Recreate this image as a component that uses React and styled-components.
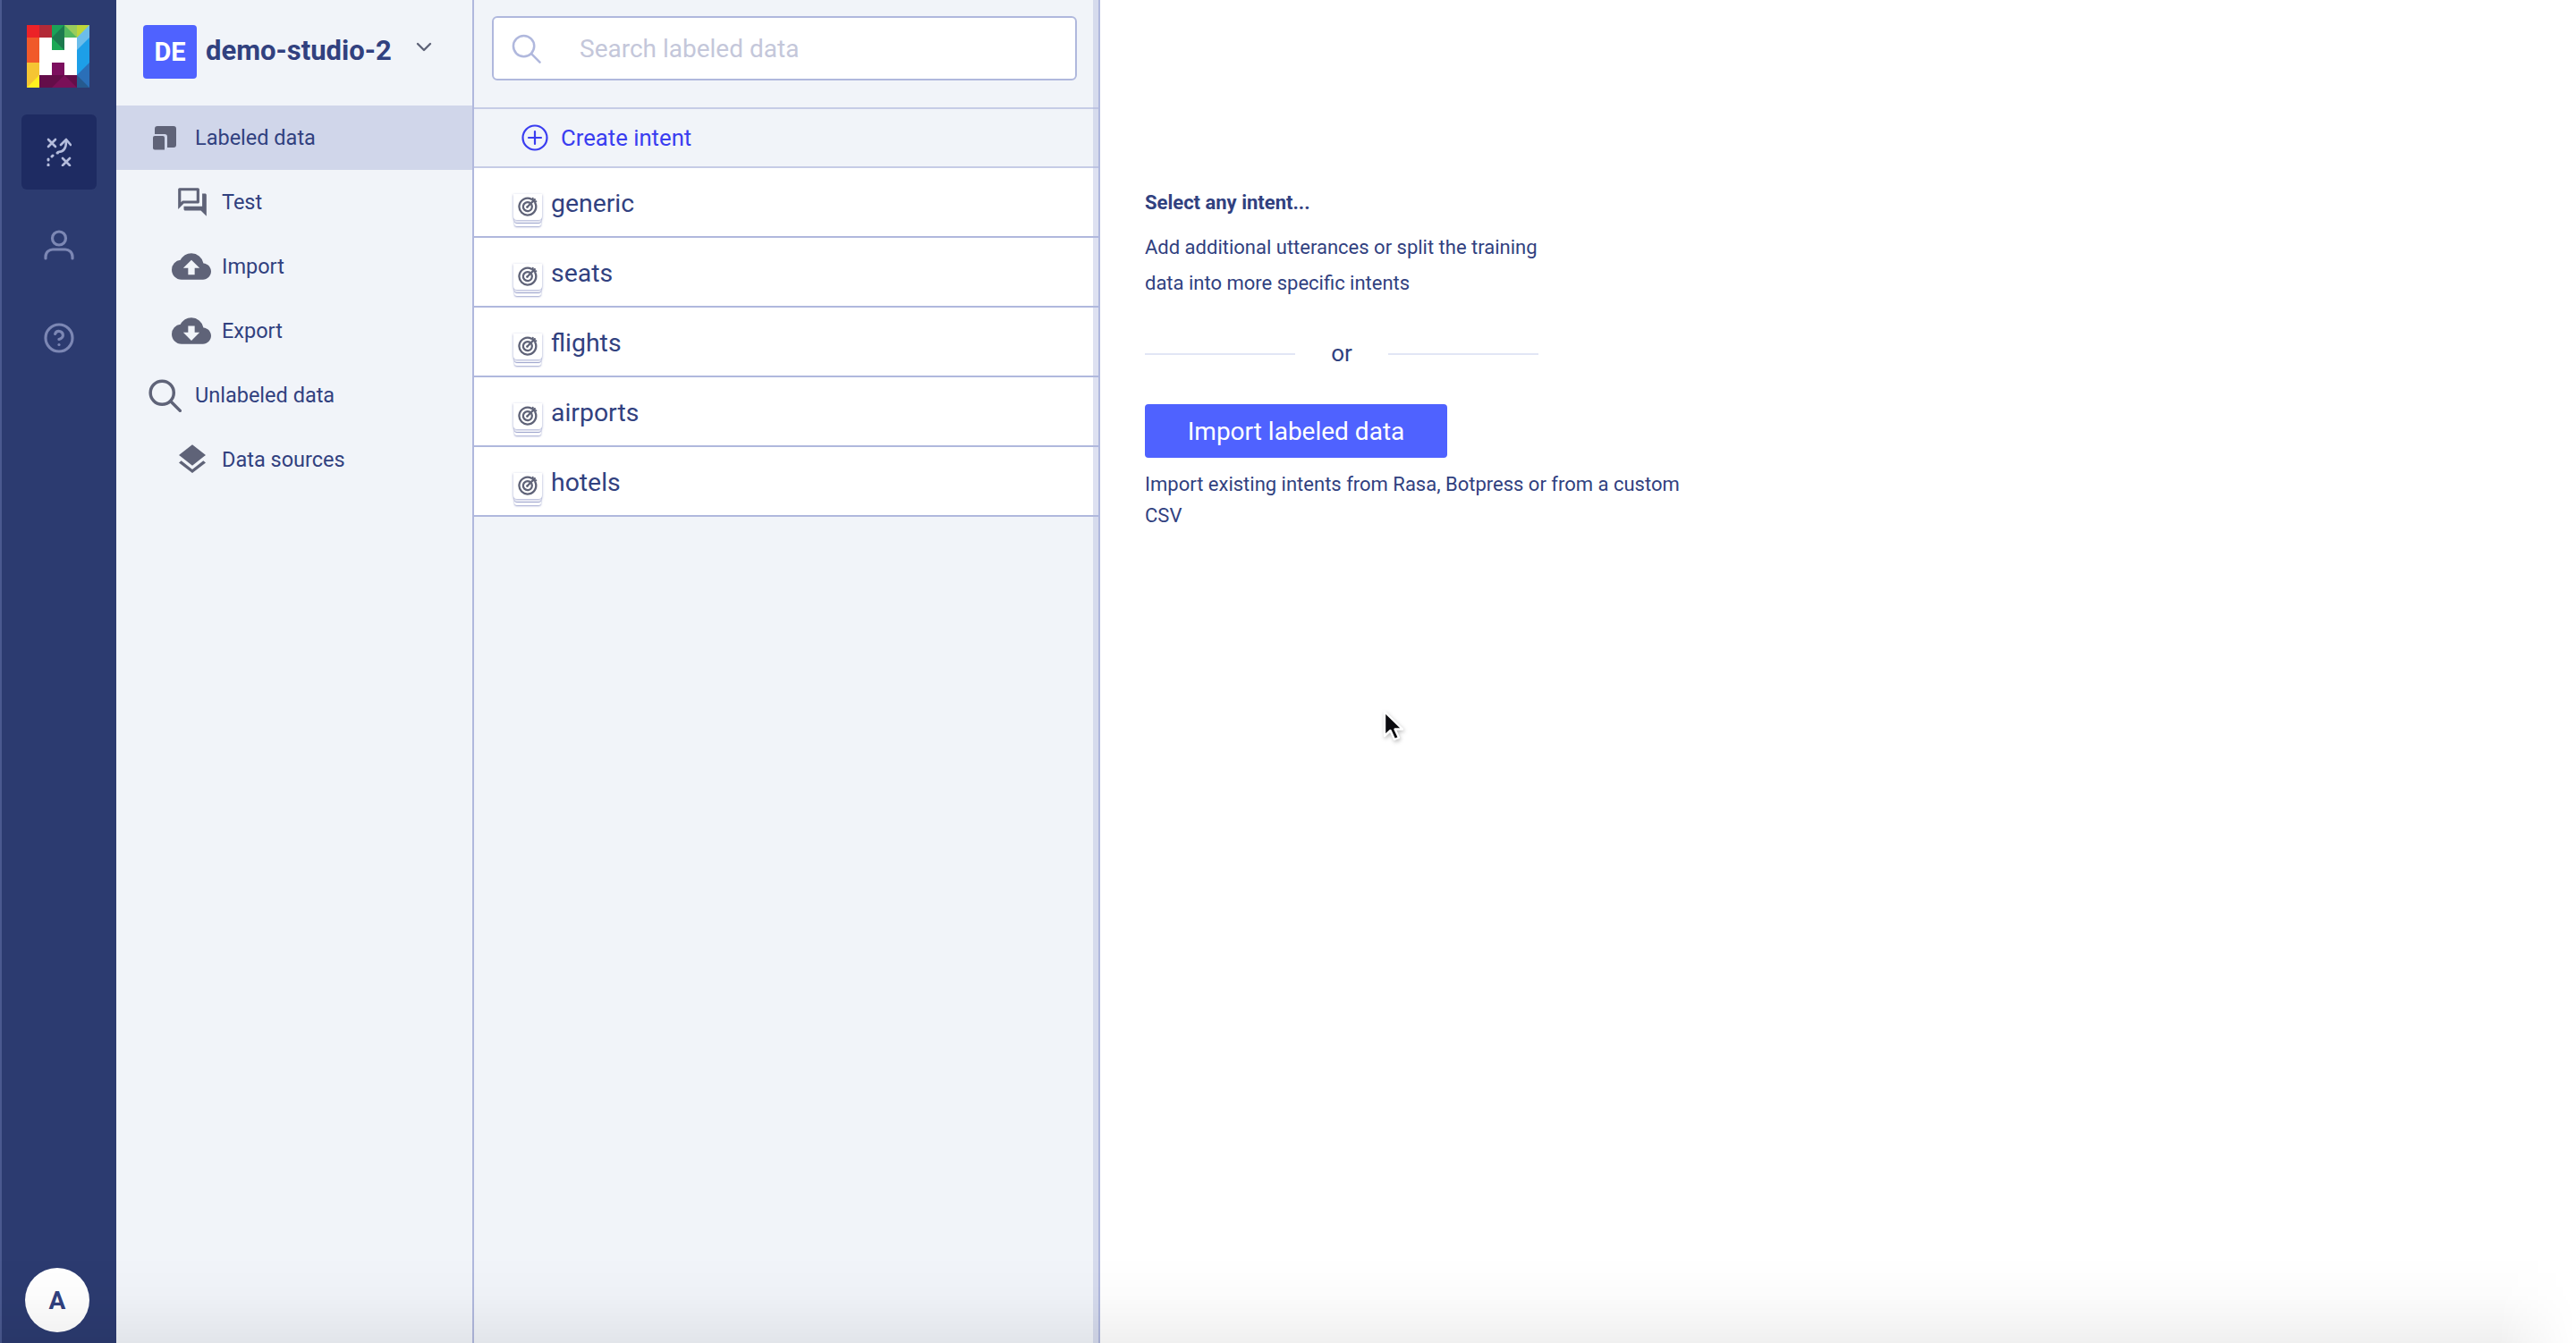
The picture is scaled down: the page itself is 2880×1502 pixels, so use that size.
import React from 'react';
import styled, { createGlobalStyle } from 'styled-components';
import { MdOutlineQuestionAnswer, MdCloudUpload, MdCloudDownload, MdLayers } from 'react-icons/md';
import { CircleHelp } from 'lucide-react';

const Global = createGlobalStyle`
  html, body { margin: 0; padding: 0; background: #fff; }
  body { font-family: Roboto, "Liberation Sans", sans-serif; overflow: hidden; }
  * { box-sizing: border-box; }
`;

const ink = '#31417f';
const iconInk = '#5f6378';
const line = '#b0b8dd';
const panel = '#f1f4f9';

const Page = styled.div`
  position: relative;
  display: flex;
  width: 2880px;
  height: 1502px;
  overflow: hidden;
`;
const Rail = styled.nav`
  flex: 0 0 130px;
  display: flex;
  flex-direction: column;
  align-items: center;
  background: #2c3b70;
  border-left: 2px solid #4a598f;
`;
const Logo = styled.svg`
  display: block;
  width: 70px;
  height: 70px;
  margin: 28px 2px 30px 0;
`;
const RailButton = styled.div`
  width: 84px;
  height: 84px;
  margin-bottom: 20px;
  border-radius: 6px;
  display: flex;
  align-items: center;
  justify-content: center;
  background: ${p => (p.$active ? '#1e2b62' : 'transparent')};
  color: #7c87b4;
`;
const Avatar = styled.div`
  margin: auto 4px 12px 0;
  width: 72px;
  height: 72px;
  border-radius: 50%;
  background: #fff;
  color: ${ink};
  display: flex;
  align-items: center;
  justify-content: center;
  font-size: 28px;
  font-weight: 700;
`;
const Sidebar = styled.aside`
  flex: 0 0 400px;
  background: ${panel};
  border-right: 2px solid ${line};
`;
const Workspace = styled.header`
  height: 118px;
  display: flex;
  align-items: flex-start;
  padding: 28px 0 0 30px;
`;
const Badge = styled.div`
  width: 60px;
  height: 60px;
  border-radius: 4px;
  background: #4f62ff;
  color: #fff;
  font-size: 29px;
  font-weight: 700;
  display: flex;
  align-items: center;
  justify-content: center;
`;
const WorkspaceName = styled.div`
  margin-left: 10px;
  height: 60px;
  line-height: 58px;
  font-size: 31px;
  font-weight: 700;
  color: ${ink};
`;
const Chevron = styled.svg`
  width: 18px;
  height: 11px;
  margin: 19px 0 0 27px;
`;
const NavRow = styled.div`
  height: 72px;
  display: flex;
  align-items: center;
  padding-left: ${p => p.$indent}px;
  background: ${p => (p.$active ? '#d0d6ea' : 'transparent')};
  color: ${iconInk};
`;
const NavIcon = styled.span`
  flex: 0 0 ${p => p.$width}px;
  display: flex;
  align-items: center;
  justify-content: flex-start;
`;
const NavLabel = styled.span`
  font-size: 23.5px;
  color: ${ink};
`;
const Lists = styled.section`
  position: relative;
  flex: 0 0 700px;
  display: flex;
  flex-direction: column;
  background: ${panel};
  border-right: 2px solid ${line};

  &::after {
    content: '';
    position: absolute;
    top: 0;
    right: 0;
    bottom: 0;
    width: 6px;
    background: rgba(176, 184, 221, 0.42);
  }
`;
const SearchBar = styled.div`
  height: 122px;
  padding: 18px 24px 0 20px;
  border-bottom: 2px solid #c6cce6;
`;
const SearchBox = styled.div`
  height: 72px;
  background: #fff;
  border: 2px solid ${line};
  border-radius: 6px;
  display: flex;
  align-items: center;
  padding-left: 20px;
`;
const Placeholder = styled.span`
  margin-left: 43px;
  font-size: 28px;
  color: #c4c7da;
`;
const CreateRow = styled.div`
  height: 66px;
  display: flex;
  align-items: center;
  padding-left: 53px;
  border-bottom: 2px solid #c6cce6;
  color: #3a3df0;
  font-size: 25.7px;
  gap: 14px;
`;
const IntentRow = styled.div`
  height: 78px;
  background: #fff;
  border-bottom: 2px solid ${line};
  display: flex;
  align-items: center;
  padding-left: 44px;
  color: ${ink};
  font-size: 28.4px;
  gap: 10px;
`;
const IntentTile = styled.div`
  position: relative;
  width: 32px;
  height: 29px;
  margin-top: 10px;
  display: flex;
  justify-content: center;
  border-radius: 0 0 4px 4px;
  background: #fff;
  box-shadow:
    0 1px 3px rgba(90, 100, 170, 0.55),
    0 4px 0 -1px #fff,
    0 5px 1px -1px rgba(90, 100, 170, 0.6),
    0 8px 0 -1px #fff,
    0 9px 2px -1px rgba(90, 100, 170, 0.6);
  color: ${iconInk};
`;
const IntentName = styled.span`
  margin-top: 2px;
`;
const Main = styled.main`
  flex: 1;
  padding: 207px 0 0 50px;
  color: ${ink};
  background: #fff;
`;
const Heading = styled.div`
  font-size: 22px;
  font-weight: 700;
  line-height: 40px;
  margin-bottom: 10px;
`;
const Copy = styled.p`
  margin: 0;
  width: ${p => p.$width}px;
  font-size: 22px;
  line-height: ${p => p.$lh}px;
`;
const OrRow = styled.div`
  display: flex;
  align-items: center;
  width: 440px;
  height: 40px;
  margin: 38px 0 37px;
  font-size: 26px;
`;
const OrLine = styled.span`
  flex: 1;
  height: 2px;
  margin-top: 2px;
  background: #e2e6f5;
`;
const OrText = styled.span`
  flex: 0 0 104px;
  text-align: center;
`;
const ImportButton = styled.div`
  width: 338px;
  height: 60px;
  border-radius: 4px;
  background: #4f62ff;
  color: #fff;
  font-size: 28px;
  display: flex;
  align-items: center;
  justify-content: center;
  margin-bottom: 12px;
`;
const Cursor = styled.svg`
  position: absolute;
  left: 1544px;
  top: 792px;
  width: 30px;
  height: 38px;
  filter: drop-shadow(1px 2px 2px rgba(0, 0, 0, 0.25));
`;
const BottomShade = styled.div`
  position: absolute;
  left: 0;
  right: 0;
  bottom: 0;
  height: 100px;
  pointer-events: none;
  background: linear-gradient(to bottom, rgba(0,0,0,0) 0%, rgba(0,0,0,0.012) 45%, rgba(0,0,0,0.06) 100%);
  -webkit-mask-image: linear-gradient(to right, #000 97%, transparent 100%);
  mask-image: linear-gradient(to right, #000 97%, transparent 100%);
`;

const HLogo = () => {
  const s = 14;
  const cells = [
    ['#ec2227', '#b32a38', '#1ba258', '#52b85f', '#bdd63a'],
    ['#f0592a', '#fff', '#1ca855', '#fff', '#6cbdea'],
    ['#f15a2a', '#fff', '#fff', '#fff', '#1d9fe8'],
    ['#f5c533', '#fff', '#7c0f5e', '#fff', '#1d9fe8'],
    ['#f5c533', '#640d49', '#640d49', '#640d49', '#265a8e'],
  ];
  return (
    <Logo viewBox="0 0 70 70" shapeRendering="geometricPrecision">
      {cells.map((row, y) => row.map((c, x) => <rect key={`${x}-${y}`} x={x * s} y={y * s} width={s + 0.2} height={s + 0.2} fill={c} />))}
      <polygon points="28,14 42,0 42,28" fill="#1d7a4e" />
      <polygon points="28,14 42,14 42,28" fill="#1d7a4e" />
      <polygon points="42,0 56,0 56,14" fill="#98cc5c" />
      <polygon points="70,0 70,14 56,14" fill="#6cbdea" />
      <polygon points="56,28 70,14 70,28" fill="#1d9fe8" />
      <polygon points="56,56 70,42 70,70" fill="#2a6fb8" />
      <polygon points="0,56 14,56 0,70" fill="#f5c533" />
      <polygon points="0,70 14,70 14,56" fill="#fff01f" />
      <polygon points="28,70 42,56 56,70" fill="#7a1058" />
      <polygon points="42,42 28,42 28,56 42,56" fill="#7c0f5e" />
    </Logo>
  );
};

const PlayIcon = () => (
  <svg width="28" height="32" viewBox="0 0 28 32" fill="none" stroke="#b4bcdc" strokeWidth="2.6" strokeLinecap="round" strokeLinejoin="round">
    <path d="M2 2l8 8M10 2l-8 8" />
    <path d="M13 16c5 0 9-3 9-12" />
    <path d="M16 8l6-6 5 6" />
    <path d="M18 23l8 8M26 23l-8 8" />
    <path d="M2 31v-1M2 25v-1M6 21l1-1M12 17h0.5" strokeWidth="3" />
  </svg>
);
const PersonIcon = () => (
  <svg width="34" height="34" viewBox="0 0 34 34" fill="none" stroke="#7c87b4" strokeWidth="3.2" strokeLinecap="round">
    <circle cx="17" cy="9.5" r="7.5" />
    <path d="M2 32v-2c0-5 4-8 8-8h14c4 0 8 3 8 8v2" />
  </svg>
);
const LabeledIcon = () => (
  <svg width="26" height="27" viewBox="0 0 26 27" fill={iconInk}>
    <path d="M5 0H23a3 3 0 013 3V21a3 3 0 01-3 3H16V12a3 3 0 00-3-3H2V3a3 3 0 013-3z" />
    <path d="M2 11H11a2 2 0 012 2V26.500H2a2 2 0 01-2-2V13a2 2 0 012-2z" />
  </svg>
);
const SearchGlyph = ({ size, color, width = 2.6 }) => (
  <svg width={size} height={size} viewBox="0 0 34 34" fill="none" stroke={color} strokeWidth={width} strokeLinecap="round">
    <circle cx="14" cy="14" r="12" />
    <path d="M23 23l9.500 9.500" />
  </svg>
);
const PlusCircle = () => (
  <svg width="30" height="30" viewBox="0 0 30 30" fill="none" stroke="#3a3df0" strokeWidth="2.2" strokeLinecap="round">
    <circle cx="15" cy="15" r="13.500" />
    <path d="M15 8v14M8 15h14" />
  </svg>
);
const TargetIcon = () => (
  <svg width="23" height="23" viewBox="0 0 22 22" fill="none" stroke="currentColor" strokeWidth="2.200" strokeLinecap="round" style={{ marginTop: 2 }}>
    <path d="M14.500 3.600A9 9 0 1 0 18.400 7.500" />
    <path d="M12.500 7.300A4.800 4.800 0 1 0 14.700 9.500" />
    <circle cx="10" cy="12" r="1.300" fill="currentColor" stroke="none" />
    <path d="M10.500 11.500L18 4" />
    <path d="M16 2.500v3.500h3.500" strokeWidth="1.800" />
  </svg>
);

const nav = [
  { label: 'Labeled data', indent: 41, width: 47, icon: <LabeledIcon />, active: true },
  { label: 'Test', indent: 66, width: 52, icon: <MdOutlineQuestionAnswer size={38} /> },
  { label: 'Import', indent: 62, width: 56, icon: <MdCloudUpload size={44} /> },
  { label: 'Export', indent: 62, width: 56, icon: <MdCloudDownload size={44} /> },
  { label: 'Unlabeled data', indent: 36, width: 52, icon: <SearchGlyph size={37} color={iconInk} width={3.2} /> },
  { label: 'Data sources', indent: 65, width: 53, icon: <MdLayers size={40} /> },
];
const intents = ['generic', 'seats', 'flights', 'airports', 'hotels'];

export default function App() {
  return (
    <Page>
      <Global />
      <Rail>
        <HLogo />
        <RailButton $active><PlayIcon /></RailButton>
        <RailButton><PersonIcon /></RailButton>
        <RailButton><CircleHelp size={36} strokeWidth={2.1} /></RailButton>
        <Avatar>A</Avatar>
      </Rail>
      <Sidebar>
        <Workspace>
          <Badge>DE</Badge>
          <WorkspaceName>demo-studio-2</WorkspaceName>
          <Chevron viewBox="0 0 18 11" fill="none" stroke={iconInk} strokeWidth="2.4" strokeLinecap="round" strokeLinejoin="round">
            <path d="M2 2l7 7 7-7" />
          </Chevron>
        </Workspace>
        {nav.map(n => (
          <NavRow key={n.label} $indent={n.indent} $active={n.active}>
            <NavIcon $width={n.width}>{n.icon}</NavIcon>
            <NavLabel>{n.label}</NavLabel>
          </NavRow>
        ))}
      </Sidebar>
      <Lists>
        <SearchBar>
          <SearchBox>
            <SearchGlyph size={33} color="#b0b8dd" />
            <Placeholder>Search labeled data</Placeholder>
          </SearchBox>
        </SearchBar>
        <CreateRow><PlusCircle />Create intent</CreateRow>
        {intents.map(name => (
          <IntentRow key={name}>
            <IntentTile><TargetIcon /></IntentTile>
            <IntentName>{name}</IntentName>
          </IntentRow>
        ))}
      </Lists>
      <Main>
        <Heading>Select any intent...</Heading>
        <Copy $width={470} $lh={40}>Add additional utterances or split the training data into more specific intents</Copy>
        <OrRow><OrLine /><OrText>or</OrText><OrLine /></OrRow>
        <ImportButton>Import labeled data</ImportButton>
        <Copy $width={620} $lh={35}>Import existing intents from Rasa, Botpress or from a custom CSV</Copy>
      </Main>
      <Cursor viewBox="0 0 30 38">
        <path d="M4 4V31L10.500 25L15 35L20 33L15.500 23.500H24Z" fill="#0c0c10" stroke="#fff" strokeWidth="2.400" strokeLinejoin="round" />
      </Cursor>
      <BottomShade />
    </Page>
  );
}
